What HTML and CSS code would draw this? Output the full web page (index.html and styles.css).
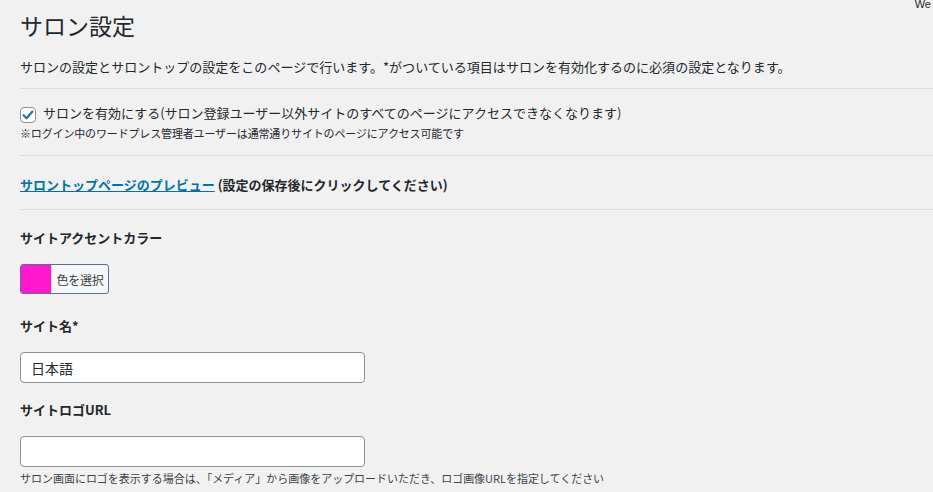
FILE: index.html
```html
<!DOCTYPE html>
<html lang="ja">
<head>
<meta charset="utf-8">
<link rel="stylesheet" href="styles.css">
</head>
<body>
<div class="wrap">
  <div class="head">
    <h1 class="title">サロン設定</h1>
    <span class="corner">We</span>
  </div>
  <p class="desc">サロンの設定とサロントップの設定をこのページで行います。*がついている項目はサロンを有効化するのに必須の設定となります。</p>
  <div class="rule"></div>
  <label class="check-row">
    <span class="checkbox"><svg viewBox="0 0 16 16" width="16" height="16"><path d="M3.6 8.2 L6.6 11.2 L12.4 4.6" fill="none" stroke="#2271b1" stroke-width="2.2" stroke-linecap="round" stroke-linejoin="round"/></svg></span>
    <span class="check-text">サロンを有効にする(サロン登録ユーザー以外サイトのすべてのページにアクセスできなくなります)</span>
  </label>
  <p class="note">※ログイン中のワードプレス管理者ユーザーは通常通りサイトのページにアクセス可能です</p>
  <div class="rule rule-2"></div>
  <p class="preview"><a class="link" href="#">サロントップページのプレビュー</a> (設定の保存後にクリックしてください)</p>
  <div class="rule rule-3"></div>
  <h2 class="label label-1">サイトアクセントカラー</h2>
  <button class="color-btn" type="button"><span class="swatch"></span><span class="color-text">色を選択</span></button>
  <h2 class="label label-2">サイト名*</h2>
  <input class="field" type="text" value="日本語">
  <h2 class="label label-3">サイトロゴURL</h2>
  <input class="field field-2" type="text" value="">
  <p class="help">サロン画面にロゴを表示する場合は、「メディア」から画像をアップロードいただき、ロゴ画像URLを指定してください</p>
</div>
</body>
</html>
```

FILE: styles.css
```css
html, body {
  margin: 0;
  padding: 0;
  background: #f1f1f1;
}
body {
  font-family: "Noto Sans CJK JP", "Noto Sans", sans-serif;
  color: #23282d;
  font-size: 13px;
  overflow: hidden;
}
.wrap {
  padding-left: 20px;
  display: flex;
  flex-direction: column;
  align-items: flex-start;
}
.head {
  align-self: stretch;
  display: flex;
  justify-content: space-between;
  align-items: flex-start;
}
.title {
  margin: 10px 0 0;
  font-size: 23px;
  font-weight: 400;
  line-height: 30px;
  color: #23282d;
}
.corner {
  font-family: "Liberation Sans", sans-serif;
  font-size: 11px;
  line-height: 14px;
  color: #23282d;
  margin-right: 2px;
  margin-top: -3px;
  white-space: nowrap;
}
.desc {
  margin: 17px 0 0;
  line-height: 20px;
  font-size: 13px;
  letter-spacing: 0.02px;
}
.rule {
  align-self: stretch;
  height: 1px;
  background: #dcdcde;
  margin-top: 11px;
}
.rule-2 { margin-top: 12px; }
.rule-3 { margin-top: 14px; }
.check-row {
  margin-top: 14px;
  display: flex;
  align-items: center;
  height: 20px;
}
.checkbox {
  width: 14px;
  height: 14px;
  border: 1px solid #8c8f94;
  border-radius: 4px;
  background: #fff;
  display: flex;
  align-items: center;
  justify-content: center;
  margin-right: 7px;
  margin-top: 3px;
}
.checkbox svg { flex: none; }
.check-text {
  font-size: 13px;
  line-height: 20px;
  letter-spacing: 0;
}
.note {
  margin: 0;
  font-size: 11px;
  line-height: 20px;
  letter-spacing: -0.15px;
}
.preview {
  margin: 19px 0 0;
  font-weight: 700;
  font-size: 13px;
  line-height: 20px;
  letter-spacing: 0;
  color: #23282d;
}
.link {
  color: #0073aa;
  text-decoration: underline;
}
.label {
  margin: 18px 0 0;
  font-size: 13px;
  font-weight: 700;
  line-height: 20px;
  color: #23282d;
  letter-spacing: 0;
}
.label-2 { margin-top: 22px; }
.label-3 { margin-top: 17px; }
.color-btn {
  margin-top: 16px;
  height: 30px;
  width: 89px;
  padding: 0;
  display: flex;
  align-items: stretch;
  border: 1px solid #5b6e9a;
  border-radius: 3px;
  background: #f6f7f7;
  overflow: hidden;
  font-family: inherit;
  cursor: pointer;
}
.swatch {
  width: 30px;
  background: #ff18cc;
  border-right: 1px solid #d5d5d9;
}
.color-text {
  flex: 1;
  display: flex;
  align-items: center;
  justify-content: center;
  font-size: 12px;
  color: #3c434a;
  letter-spacing: -0.3px;
}
.field {
  margin-top: 16px;
  box-sizing: border-box;
  width: 345px;
  height: 31px;
  border: 1px solid #8c8f94;
  border-radius: 4px;
  background: #fff;
  padding: 0 10px;
  font-family: inherit;
  font-size: 14px;
  color: #23282d;
  outline: none;
}
.help {
  margin: 1px 0 0;
  font-size: 11px;
  line-height: 20px;
  letter-spacing: -0.02px;
  color: #3c434a;
}
```
